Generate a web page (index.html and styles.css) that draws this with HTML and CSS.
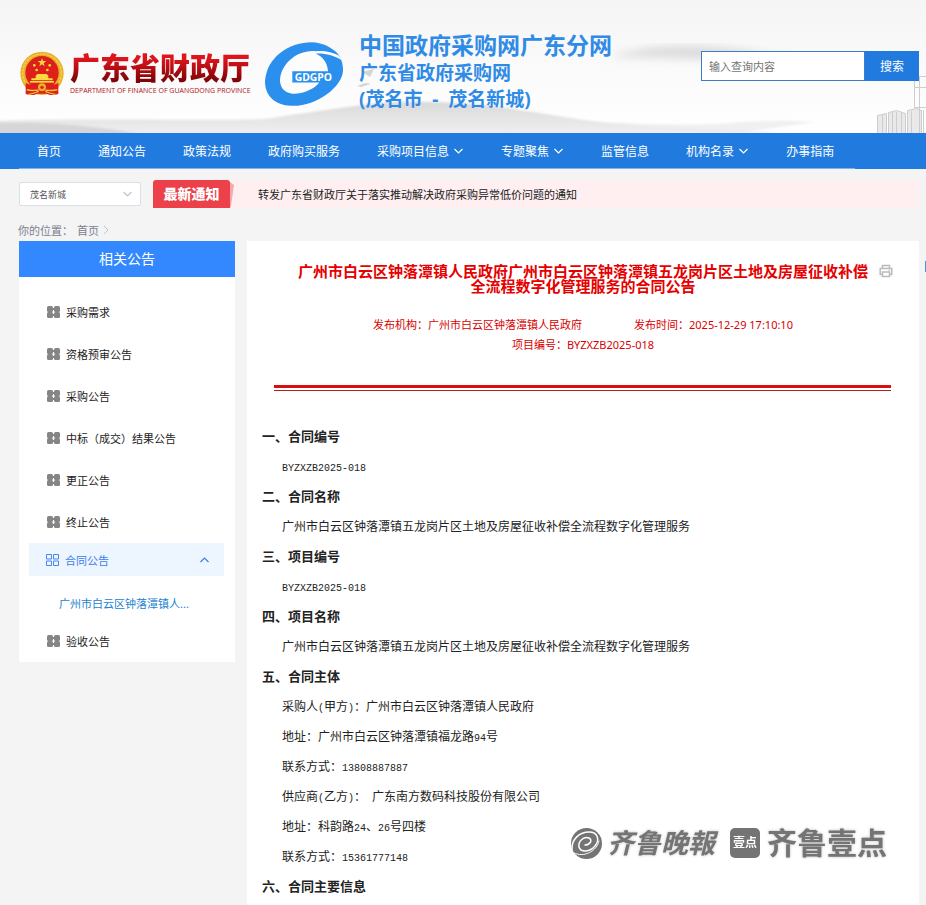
FILE: index.html
```html
<!DOCTYPE html>
<html lang="zh-CN">

<head>
    <meta charset="UTF-8">
    <meta name="viewport" content="width=device-width, initial-scale=1.0">
    <title>广东省政府采购网</title>
    <link rel="stylesheet" href="styles.css">
</head>

<body>
    <svg class="sprite" width="0" height="0" aria-hidden="true">
        <symbol id="icon-grid" viewBox="0 0 13 12">
            <g fill="#858585">
                <rect x="0" y="0" width="6" height="6" rx="1.500"></rect>
                <rect x="7" y="0" width="6" height="6" rx="1.500"></rect>
                <rect x="0" y="6" width="6" height="6" rx="1.500"></rect>
                <rect x="7" y="6" width="6" height="6" rx="1.500"></rect>
                <rect x="5" y="2" width="3" height="2"></rect>
                <rect x="5" y="8" width="3" height="2"></rect>
            </g>
        </symbol>
        <symbol id="icon-down" viewBox="0 0 10 6">
            <path d="M1 1l4 4 4-4" fill="none" stroke="currentColor" stroke-width="1.2"></path>
        </symbol>
    </svg>

    <header class="header">
        <svg class="header-bg" viewBox="0 0 926 133" preserveAspectRatio="none" aria-hidden="true">
            <defs>
                <linearGradient id="hill" x1="0" y1="0" x2="0" y2="1">
                    <stop offset="0" stop-color="#dadada"></stop>
                    <stop offset="1" stop-color="#f0f0f0"></stop>
                </linearGradient>
                <filter id="soft"><feGaussianBlur stdDeviation="1.2"></feGaussianBlur></filter>
                <filter id="softer"><feGaussianBlur stdDeviation="4"></feGaussianBlur></filter>
            </defs>
            <path d="M610 57C650 44 700 42 760 53C800 58 840 63 860 68C780 62 700 58 610 57Z" fill="#dcdcdc" filter="url(#softer)"></path>
            <path d="M560 123C630 121 690 128 740 122C770 120 790 121 815 122C780 127 760 130 740 133H560Z" fill="#f0f0f0" filter="url(#soft)"></path>
            <path d="M-5 121C60 118 200 121 265 119C310 112 340 108 370 104C420 99 480 103 520 110C560 116 600 124 660 127C700 129 760 130 800 136H-5Z" fill="url(#hill)" filter="url(#soft)"></path>
            <path d="M-5 123C60 121 110 128 150 136H-5Z" fill="#d6d6d6" filter="url(#soft)"></path>
            <path d="M362 72l12-3-4 8zM357 86l8-3 6 1-10 3z" fill="#d5d5d5"></path>
            <g fill="#e9e9e9" stroke="#cdcdcd" stroke-width="1">
                <path d="M877.500 115.500l9-2v20h-9zM888.500 112.500l8-2 9 3v20h-17zM907.500 110.500l9-2 5 2v23h-14z"></path>
                <path d="M914.500 76.500h12v31h-12zM914.500 87.500h12M919.500 76v57M882.500 115v18M892.500 112v21M896.500 112v21M901.500 113v20M911.500 111v22M923.500 110v23" fill="none"></path>
            </g>
        </svg>
        <div class="brand">
            <div class="logos">
                <svg class="emblem" viewBox="57 152 138 136" role="img" aria-label="国徽">
                    <circle cx="126" cy="218" r="65" fill="#e9b02c"></circle>
                    <circle cx="126" cy="218" r="58" fill="none" stroke="#f7d34e" stroke-width="4" stroke-dasharray="8 3"></circle>
                    <circle cx="126" cy="216" r="50" fill="#dd2019"></circle>
                    <path d="M126 172l3 9h10l-8 6 3 10-8-6-8 6 3-10-8-6h10z" fill="#fbd93f"></path>
                    <g fill="#fbd93f">
                        <circle cx="103" cy="194" r="4"></circle>
                        <circle cx="149" cy="194" r="4"></circle>
                        <circle cx="110" cy="208" r="4"></circle>
                        <circle cx="142" cy="208" r="4"></circle>
                        <path d="M107 225l5-5h28l5 5v8h13v6H94v-6h13z"></path>
                        <path d="M90 241h72v5H90z"></path>
                    </g>
                    <path d="M77 246c12 8 27 8 36 1h26c9 7 24 7 36-1v34c-14 4-26 4-35-1h-28c-9 5-21 5-35 1z" fill="#dd2019"></path>
                    <circle cx="126" cy="260" r="12" fill="#e9b02c"></circle>
                    <circle cx="126" cy="260" r="5" fill="#dd2019"></circle>
                    <path d="M80 267c15 5 25 1 35 2M172 267c-15 5-25 1-35 2M86 281c15-2 20-5 30-9M166 281c-15-2-20-5-30-9" fill="none" stroke="#f3c63c" stroke-width="4"></path>
                </svg>
                <div class="dept">
                    <div class="dept-cn">广东省财政厅</div>
                    <div class="dept-en">DEPARTMENT OF FINANCE OF GUANGDONG PROVINCE</div>
                </div>
                <svg class="gdgpo" viewBox="795 128 234 191" role="img" aria-label="GDGPO">
                    <path d="M795 245C800 170 870 128 935 128C965 128 995 143 1013 162C1022 174 1029 190 1029 212C1028 262 950 319 880 319C835 319 795 298 795 245Z" fill="#2b8fee"></path>
                    <path d="M947 155C890 150 840 195 840 245C842 272 862 282 885 283C920 280 945 265 958 249H877V215H984C983 192 970 172 947 162C970 160 1005 166 1029 185L1016 168C1000 158 970 152 947 155Z" fill="#fcfcfc"></path>
                    <text x="884" y="243" class="gdgpo-text">GDGPO</text>
                </svg>
            </div>
            <div class="site-name">
                <div class="site-main">中国政府采购网广东分网</div>
                <div class="site-sub">广东省政府采购网</div>
                <div class="site-area">(茂名市&nbsp; - &nbsp;茂名新城)</div>
            </div>
        </div>
        <form class="search">
            <input type="text" placeholder="输入查询内容" aria-label="输入查询内容">
            <button type="button">搜索</button>
        </form>
    </header>

    <nav class="navbar">
        <ul>
            <li><a href="#">首页</a></li>
            <li><a href="#">通知公告</a></li>
            <li><a href="#">政策法规</a></li>
            <li><a href="#">政府购买服务</a></li>
            <li><a href="#">采购项目信息<svg class="arrow"><use href="#icon-down"></use></svg></a></li>
            <li><a href="#">专题聚焦<svg class="arrow"><use href="#icon-down"></use></svg></a></li>
            <li><a href="#">监管信息</a></li>
            <li><a href="#">机构名录<svg class="arrow"><use href="#icon-down"></use></svg></a></li>
            <li><a href="#">办事指南</a></li>
        </ul>
    </nav>

    <div class="notice-row">
        <div class="area-select">
            <select aria-label="区域">
                <option>茂名新城</option>
            </select>
            <svg class="arrow"><use href="#icon-down"></use></svg>
        </div>
        <div class="notice">
            <strong class="notice-tag">最新通知</strong>
            <svg class="notice-fold" viewBox="0 0 4 28" aria-hidden="true">
                <path d="M0 2l4 3-3 21-1 2z" fill="#f6a9ad"></path>
            </svg>
            <a href="#">转发广东省财政厅关于落实推动解决政府采购异常低价问题的通知</a>
        </div>
    </div>

    <div class="breadcrumb">
        <span>你的位置：</span>
        <a href="#">首页</a>
        <svg width="6" height="10" viewBox="0 0 6 10" aria-hidden="true">
            <path d="M1 1l4 4-4 4" fill="none" stroke="#c0c4cc"></path>
        </svg>
    </div>

    <div class="layout">
        <aside class="sidebar">
            <h2>相关公告</h2>
            <ul>
                <li><a href="#"><svg class="icon"><use href="#icon-grid"></use></svg>采购需求</a></li>
                <li><a href="#"><svg class="icon"><use href="#icon-grid"></use></svg>资格预审公告</a></li>
                <li><a href="#"><svg class="icon"><use href="#icon-grid"></use></svg>采购公告</a></li>
                <li><a href="#"><svg class="icon"><use href="#icon-grid"></use></svg>中标（成交）结果公告</a></li>
                <li><a href="#"><svg class="icon"><use href="#icon-grid"></use></svg>更正公告</a></li>
                <li><a href="#"><svg class="icon"><use href="#icon-grid"></use></svg>终止公告</a></li>
                <li>
                    <a href="#" class="active">
                        <svg class="icon" viewBox="0 0 13 12" fill="none" stroke="#4a86ee">
                            <path d="M.5.5h5v4.500h-5zM7.500.5h5v4.500h-5zM.5 7h5v4.500h-5zM7.500 7h5v4.500h-5z"></path>
                        </svg>
                        合同公告
                        <svg class="arrow up"><use href="#icon-down"></use></svg>
                    </a>
                    <a href="#" class="sub">广州市白云区钟落潭镇人...</a>
                </li>
                <li><a href="#"><svg class="icon"><use href="#icon-grid"></use></svg>验收公告</a></li>
            </ul>
        </aside>

        <main class="article">
            <div class="article-head">
                <h1>广州市白云区钟落潭镇人民政府广州市白云区钟落潭镇五龙岗片区土地及房屋征收补偿全流程数字化管理服务的合同公告</h1>
                <button type="button" class="print" aria-label="打印">
                    <svg width="14" height="14" viewBox="0 0 14 14" fill="none" stroke="#bbb" stroke-width="1.500">
                        <path d="M3.500 4V1.500h7V4M3.500 10.500H1.200V4.500h11.600v6h-2.300M3.500 8h7v4.500h-7z"></path>
                        <path d="M9.500 6.300h1.500" stroke-width="1"></path>
                    </svg>
                </button>
            </div>
            <div class="meta">
                <span>发布机构：广州市白云区钟落潭镇人民政府</span>
                <span>发布时间：2025-12-29 17:10:10</span>
            </div>
            <div class="meta">
                <span>项目编号：BYZXZB2025-018</span>
            </div>
            <div class="red-line"></div>
            <div class="content">
                <h3>一、合同编号</h3>
                <p><span class="num">BYZXZB2025-018</span></p>
                <h3>二、合同名称</h3>
                <p>广州市白云区钟落潭镇五龙岗片区土地及房屋征收补偿全流程数字化管理服务</p>
                <h3>三、项目编号</h3>
                <p><span class="num">BYZXZB2025-018</span></p>
                <h3>四、项目名称</h3>
                <p>广州市白云区钟落潭镇五龙岗片区土地及房屋征收补偿全流程数字化管理服务</p>
                <h3>五、合同主体</h3>
                <p>采购人<span class="num">(</span>甲方<span class="num">)</span>：广州市白云区钟落潭镇人民政府</p>
                <p>地址：广州市白云区钟落潭镇福龙路<span class="num">94</span>号</p>
                <p>联系方式：<span class="num">13808887887</span></p>
                <p>供应商<span class="num">(</span>乙方<span class="num">)</span>：<span class="num"> </span>广东南方数码科技股份有限公司</p>
                <p>地址：科韵路<span class="num">24</span>、<span class="num">26</span>号四楼</p>
                <p>联系方式：<span class="num">15361777148</span></p>
                <h3>六、合同主要信息</h3>
            </div>
        </main>
    </div>

    <div class="side-tab"></div>

    <div class="watermark">
        <svg width="33" height="33" viewBox="0 0 33 33" aria-hidden="true">
            <circle cx="16.500" cy="16.500" r="15.500" fill="#747474"></circle>
            <g fill="none" stroke="#fff" stroke-linecap="round">
                <path d="M2 23C1 12 10 5 19 5C28 5 30 13 25 19C20 25 11 26 9 20C8 14 14 9 19 11C23 13 20 18 15 18" stroke-width="1.500"></path>
                <path d="M4 26C14 31 27 24 29 14" stroke-width="1"></path>
            </g>
        </svg>
        <span class="wm-paper">齐鲁晚報</span>
        <span class="wm-box">壹点</span>
        <span class="wm-app">齐鲁壹点</span>
    </div>
</body>

</html>
```

FILE: styles.css
```css
* {
    box-sizing: border-box;
}

body {
    margin: 0;
    min-height: 100vh;
    display: flex;
    flex-direction: column;
    background-color: #f4f4f4;
    font-family: "Noto Sans", "Noto Sans CJK SC", sans-serif;
    font-size: 11px;
    color: #222;
}

a {
    color: inherit;
    text-decoration: none;
}

ul {
    list-style: none;
    margin: 0;
    padding: 0;
}

h1,
h2,
h3,
p {
    margin: 0;
}

.sprite {
    position: absolute;
}

.arrow {
    width: 11px;
    height: 6px;
}

/* Header */
.header {
    position: relative;
    display: flex;
    justify-content: space-between;
    padding: 31px 7px 22px 19px;
    background: linear-gradient(#f5f5f5, #ffffff);
}

.header-bg {
    position: absolute;
    top: 0;
    left: 0;
    width: 100%;
    height: 100%;
}

.brand {
    position: relative;
    display: flex;
    align-items: center;
}

.logos {
    display: flex;
    align-items: center;
    padding-top: 6px;
}

.emblem {
    width: 46px;
    height: 46px;
    margin-right: 5px;
}

.dept {
    width: 180px;
    margin-right: 15px;
    white-space: nowrap;
}

.dept-cn {
    font-size: 30px;
    line-height: 32px;
    font-weight: 900;
    color: transparent;
    background: linear-gradient(#e0141c 20%, #7d0508 90%);
    -webkit-background-clip: text;
    background-clip: text;
}

.dept-en {
    padding-top: 2px;
    font-family: "Open Sans", sans-serif;
    font-size: 7px;
    line-height: 10px;
    color: #b01218;
}

.gdgpo {
    width: 78px;
    height: 64px;
    margin-right: 16px;
}

.gdgpo-text {
    font-family: "Open Sans", sans-serif;
    font-size: 31px;
    font-weight: bold;
    fill: #fff;
}

.site-name {
    font-weight: bold;
    color: #2f8be6;
    white-space: nowrap;
}

.site-main {
    font-size: 23px;
    line-height: 28px;
}

.site-sub,
.site-area {
    font-size: 19px;
    line-height: 28px;
}

.site-area {
    line-height: 24px;
}

.search {
    position: relative;
    display: flex;
    width: 218px;
    height: 30px;
    margin-top: 20px;
}

.search input {
    flex: 1;
    min-width: 0;
    padding: 0 7px;
    border: 1px solid #3a7cc8;
    background-color: #fff;
    font: inherit;
}

.search input::placeholder {
    color: #757575;
}

.search button {
    width: 54px;
    padding: 0;
    border: 0;
    background-color: #217bdf;
    color: #fff;
    font: inherit;
    font-size: 12px;
}

/* Navigation bar */
.navbar {
    padding: 0 71px 0 19px;
    background-color: #217bdf;
    color: #fff;
    font-size: 12px;
}

.navbar ul {
    display: flex;
    gap: 37px;
    height: 36px;
    padding-left: 18px;
    border-bottom: 1px solid #7fb2ec;
}

.navbar a {
    display: flex;
    align-items: center;
    gap: 4px;
    height: 36px;
    white-space: nowrap;
}

/* Notice */
.notice-row {
    display: flex;
    align-items: center;
    gap: 12px;
    margin: 11px 7px 0 19px;
}

.area-select {
    position: relative;
    width: 122px;
}

.area-select select {
    appearance: none;
    width: 100%;
    height: 24px;
    padding: 0 10px;
    border: 1px solid #dcdfe6;
    border-radius: 2px;
    background-color: #fff;
    color: #555;
    font: inherit;
    font-size: 9px;
}

.area-select .arrow {
    position: absolute;
    top: 9px;
    right: 8px;
    color: #c0c4cc;
}

.notice {
    flex: 1;
    display: flex;
    align-items: center;
    height: 28px;
    background-color: #ffeff0;
}

.notice-tag {
    width: 77px;
    height: 28px;
    border-radius: 3px 3px 0 0;
    background-color: #ec414b;
    color: #fff;
    font-size: 14px;
    font-weight: 900;
    line-height: 28px;
    text-align: center;
}

.notice-fold {
    width: 4px;
    height: 28px;
    margin-right: 24px;
}

.breadcrumb {
    display: flex;
    align-items: center;
    gap: 4px;
    height: 20px;
    margin: 12px 7px 1px 18px;
    color: #7b8190;
}

/* Two columns */
.layout {
    flex: 1;
    display: flex;
    align-items: flex-start;
    gap: 12px;
    padding: 0 7px 0 19px;
}

.sidebar {
    width: 216px;
    background-color: #fff;
}

.sidebar h2 {
    background-color: #3388ff;
    color: #fff;
    font-size: 14px;
    font-weight: normal;
    line-height: 36px;
    text-align: center;
}

.sidebar ul {
    padding: 14px 11px 0 10px;
}

.sidebar a {
    display: flex;
    align-items: center;
    gap: 6px;
    height: 42px;
    padding-left: 18px;
}

.icon {
    width: 13px;
    height: 12px;
}

.sidebar .active {
    height: 33px;
    padding: 0 14px 0 17px;
    background-color: #edf5fe;
    color: #3d7eea;
}

.sidebar .up {
    margin-left: auto;
    transform: rotate(180deg);
}

.sidebar .sub {
    height: 44px;
    padding: 9px 0 0 30px;
    color: #1a82d2;
}

.article {
    flex: 1;
    min-width: 0;
    align-self: stretch;
    padding: 23px 0 4px;
    background-color: #fff;
}

.article-head {
    display: grid;
    grid-template-columns: 50px 1fr 50px;
    align-items: start;
    margin-bottom: 21px;
}

.article-head h1 {
    grid-column: 2;
    font-size: 15px;
    line-height: 15px;
    text-align: center;
    color: #e60000;
}

.print {
    justify-self: start;
    display: flex;
    margin-left: 10px;
    padding: 0;
    border: 0;
    background: none;
}

.meta {
    display: flex;
    justify-content: center;
    gap: 52px;
    line-height: 20px;
    color: #d80000;
}

.red-line {
    height: 6px;
    margin: 30px 28px 30px 27px;
    border-top: 3px solid #d90f0f;
    border-bottom: 1px solid #b32020;
}

.content {
    padding: 0 15px;
    font-family: "Noto Sans CJK SC", sans-serif;
    font-size: 12px;
    line-height: 30px;
}

.content h3 {
    font-size: 13px;
}

.content p {
    padding-left: 20px;
}

.num {
    font-family: "Liberation Mono", monospace;
    font-size: 10px;
    line-height: 1;
}

/* Floating parts */
.side-tab {
    position: fixed;
    top: 261px;
    right: 0;
    width: 1px;
    height: 11px;
    background-color: #3a9be0;
}

.watermark {
    position: fixed;
    right: 39px;
    bottom: 45px;
    display: flex;
    align-items: center;
    height: 34px;
    color: #747474;
    font-weight: bold;
    line-height: 34px;
    text-shadow: 0 0 3px #bbb;
}

.wm-paper {
    margin: 0 15px 0 4px;
    font-size: 27px;
    font-style: italic;
}

.wm-box {
    width: 30px;
    height: 30px;
    margin-right: 7px;
    border-radius: 5px;
    background-color: #747474;
    color: #fff;
    font-size: 12px;
    line-height: 30px;
    text-align: center;
    text-shadow: none;
}

.wm-app {
    font-size: 30px;
}
```
